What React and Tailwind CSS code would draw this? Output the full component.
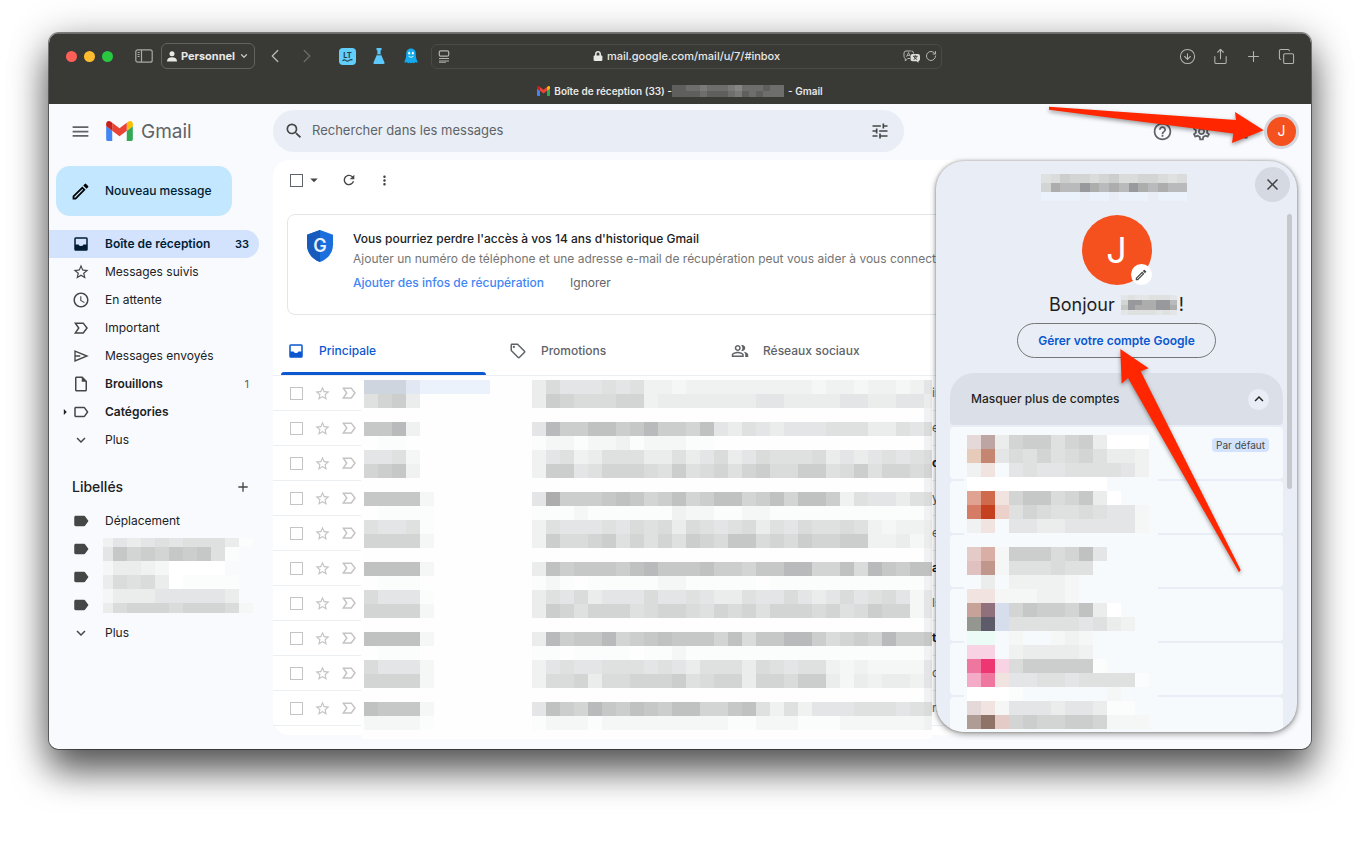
import {
  ChevronDown,
  ChevronLeft,
  ChevronRight,
  CircleArrowDown,
  Copy,
  Plus,
  RotateCw,
  Share,
} from "lucide-react";
import { FaLock } from "react-icons/fa";
import {
  MdAccessTime,
  MdAdd,
  MdApps,
  MdArrowDropDown,
  MdArrowRight,
  MdClose,
  MdExpandMore,
  MdHelpOutline,
  MdKeyboardArrowUp,
  MdLabel,
  MdLabelOutline,
  MdMenu,
  MdMoreVert,
  MdOutlineInsertDriveFile,
  MdOutlineLocalOffer,
  MdOutlineModeEdit,
  MdOutlinePeopleAlt,
  MdOutlineSettings,
  MdRefresh,
  MdSearch,
  MdStarBorder,
  MdTune,
} from "react-icons/md";

// one letter per pixelated cell, from light to dark
const SHADES = {
  ".": "transparent",
  w: "#ffffff",
  z: "#f1f2f4",
  a: "#fbfcfc",
  b: "#f5f6f6",
  c: "#f0f1f1",
  d: "#ebecec",
  e: "#e4e5e6",
  f: "#dfe0e0",
  g: "#dadbdb",
  h: "#d3d4d4",
  i: "#cccdcd",
  j: "#c6c7c7",
  k: "#c0c1c1",
  l: "#b9babb",
  m: "#adadad",
  n: "#97999d",
  1: "#cfd5de",
  2: "#e1e8f3",
  3: "#ecf2fc",
  A: "#e4d9d8",
  B: "#bca5a3",
  C: "#e6cbbb",
  D: "#c48670",
  E: "#f0e3e0",
  F: "#e0a392",
  G: "#d06a4d",
  H: "#d47c66",
  I: "#c5401f",
  J: "#ecd0ca",
  K: "#e4cbc8",
  L: "#d9afa5",
  M: "#e0c1c0",
  N: "#c0978a",
  O: "#c7a299",
  P: "#91707d",
  Q: "#949790",
  R: "#5d5a6a",
  S: "#d6ddec",
  T: "#ebfcf6",
  U: "#f7d3e3",
  V: "#ee769f",
  W: "#ed3672",
  X: "#f3abc8",
  Y: "#af9d95",
  Z: "#8f7367",
};

const MAIL_CELLS = [
  ["111233333", "dgeeefefccbcccccccccbccbccbce"],
  ["fhid", "dihggghhcdddddddeeddddeeddeedf"],
  ["", "............................z"],
  ["jjlc", "eliikkijliihkedfedeeefffddfeg"],
  [".aa", "abbabbcabbbaa...............z"],
  ["eefb", "cefcdfffddfdegdegfffgdedefefg"],
  ["hijc", "ciiefhhhgfifghfhiggiifgifhhgh"],
  ["", "............................z"],
  ["jjjjb", "emiiijkjhikhikkhikhkkicfeedfg"],
  [".aaaa", "aaabaaaaaacbbaabbaaaaaaaaaaaz"],
  ["feefa", "cfeeefegfgdgfefgdfegffgfcbccd"],
  ["hhhhb", "cigghifhfhfihgjjghgihhiiccdbd"],
  ["", "............................z"],
  ["kkkkb", "dkijjjikljjjkiihjjllhhkgljikk"],
  [".aaa", "aba.aaaaabbaaaaa.aaaaaaaaaaaz"],
  ["geeea", "dfegdeeegeefeddfeegedegefgebe"],
  ["hhhhb", "dihfhhhfghhgfhghfhhhghfgihhbe"],
  ["", "............................z"],
  ["kkkkb", "dlijjlhijkjjjhkgjjllighihliij"],
  [".aaa", "aa.aaaa.aabaaaaaaaaaaaaaaaaaz"],
  ["geeeb", "cefeefffefedfffdgfeffcbcbbbbe"],
  ["hhhhb", "cgghdgghhhifghhdhhgiidbdcddce"],
  ["", "............................z"],
  ["kjjjb", "ekihljikjikkhhjkfcfceeefffefg"],
  ["bbbba", "abbbabbbbbbbbbaabbbaaabbbbbbc"],
].map(([sender, text]) => sender.padEnd(12, ".") + text);

const ACCOUNT_CELLS = [
  "ABdhiifhidwww.",
  "CDegfhfghfddc.",
  "cE.efeeffffec.",
  "wwwwwwwwww....",
  "FGEhjjghjdw...",
  "HIJfhgffgfeeb.",
  "cE.eeddeeeeeb.",
  "..............",
  "KLbiiighke....",
  "MNbfffgff.....",
  ".d.ccccb......",
  "EEbbbccb......",
  "OPShjiihkdw...",
  "QRSfffffefdc..",
  "TT.b..bcb.....",
  "UU.cddddc.....",
  "VWUgiiiiia....",
  "XVEeeffeffffa.",
  "wwwa......b...",
  "AEbeeedeedaa..",
  "YZKhihhiihbbb.",
];

const EMAIL_CELLS = ["fgihhghigghhgfg", "hmllnmlmlnmlmll", "3333.33.333.333"];
const NAME_CELLS = ["efeefffe", "hnnmmnnl", "jnmmmnnm", "effffefe"];
const TITLE_CELLS = ["4455655567555455", "4444544456454555"];

const TITLE_SHADES = {
  4: "#5f5f5d",
  5: "#6e6e6c",
  6: "#7a7a78",
  7: "#868684",
};

function InboxIcon({ className }) {
  return (
    <svg viewBox="0 0 24 24" className={className} fill="currentColor" aria-hidden="true">
      <path
        fillRule="evenodd"
        d="M5 3h14a2 2 0 0 1 2 2v14a2 2 0 0 1-2 2H5a2 2 0 0 1-2-2V5a2 2 0 0 1 2-2zM5 5v7.500h3.700a3.600 3.600 0 0 0 6.600 0H19V5z"
      />
    </svg>
  );
}

function ImportantIcon({ className }) {
  return (
    <svg viewBox="0 0 24 24" className={className} fill="none" stroke="currentColor" strokeWidth="2" aria-hidden="true">
      <path d="M4.500 5.500h10.500l5 6.500-5 6.500H4.500l4.500-6.500z" />
    </svg>
  );
}

function SendIcon({ className }) {
  return (
    <svg viewBox="0 0 24 24" className={className} fill="none" stroke="currentColor" strokeWidth="1.800" aria-hidden="true">
      <path d="M4 5.500L20 12 4 18.500zM4 12h7" />
    </svg>
  );
}

const NAV = [
  { label: "Boîte de réception", icon: InboxIcon, count: "33", active: true },
  { label: "Messages suivis", icon: MdStarBorder },
  { label: "En attente", icon: MdAccessTime },
  { label: "Important", icon: ImportantIcon },
  { label: "Messages envoyés", icon: SendIcon },
  { label: "Brouillons", icon: MdOutlineInsertDriveFile, count: "1", bold: true },
  { label: "Catégories", icon: MdLabelOutline, bold: true, arrow: true },
  { label: "Plus", icon: MdExpandMore },
];

const LABELS = [
  { label: "Déplacement", icon: MdLabel },
  { icon: MdLabel },
  { icon: MdLabel },
  { icon: MdLabel },
  { label: "Plus", icon: MdExpandMore },
];

const LABEL_CELLS = [
  "cedefefffdac.",
  "ejhihjijfa.c.",
  "bddcbwwww....",
  "dgfgdwaaaa...",
  "bdddeeeeed...",
  "dghhhghhhgb..",
];

const TABS = [
  { label: "Principale", icon: InboxIcon, active: true },
  { label: "Promotions", icon: MdOutlineLocalOffer },
  { label: "Réseaux sociaux", icon: MdOutlinePeopleAlt },
];

const SNIPPETS = [
  { text: "in" },
  { text: "e" },
  { text: "c", bold: true },
  { text: "y" },
  { text: "e" },
  { text: "a", bold: true },
  { text: "ls" },
  { text: "t", bold: true },
  { text: "c" },
  { text: "n" },
];

function Mosaic({ rows, cell, shades = SHADES }) {
  return (
    <div aria-hidden="true">
      {rows.map((row, y) => (
        <div key={y} className="flex">
          {row.split("").map((c, x) => (
            <span key={x} className={cell} style={{ backgroundColor: shades[c] }} />
          ))}
        </div>
      ))}
    </div>
  );
}

function GmailLogo({ className }) {
  return (
    <svg viewBox="52 42 88 66" className={className} aria-hidden="true">
      <path fill="#4285f4" d="M58 108h14V74L52 59v43c0 3.32 2.69 6 6 6" />
      <path fill="#34a853" d="M120 108h14c3.32 0 6-2.69 6-6V59l-20 15" />
      <path fill="#fbbc04" d="M120 48v26l20-15v-8c0-7.42-8.47-11.65-14.4-7.2" />
      <path fill="#ea4335" d="M72 74V48l24 18 24-18v26L96 92" />
      <path fill="#c5221f" d="M52 51v8l20 15V48l-5.6-4.2c-5.94-4.45-14.4-.22-14.4 7.2" />
    </svg>
  );
}

function ExtensionIcons() {
  return (
    <>
      <button aria-label="LanguageTool" className="ml-[21px]">
        <svg viewBox="0 0 17 17" className="size-[17px]">
          <rect width="17" height="17" rx="4" fill="#62cffb" />
          <text x="8.5" y="9.5" textAnchor="middle" fontSize="7.5" fontWeight="700" fill="#26414d">
            LT
          </text>
          <path d="M3.5 12.8q1.7-1.8 3.3-.4t3.4 0 3.3-.4" fill="none" stroke="#26414d" strokeWidth="1.2" />
        </svg>
      </button>
      <button aria-label="Flacon" className="ml-4">
        <svg viewBox="0 0 14 18" className="h-[18px] w-3.5">
          <path d="M4.5 1h5v2.2h-.9v3.2l3.900 9.200c.3.8-.1 1.400-.9 1.400H2.400c-.8 0-1.200-.6-.9-1.400l3.900-9.200V3.200h-.9z" fill="#5cc8fb" />
          <path d="M5 7.800h4" stroke="#393936" strokeWidth="1" />
        </svg>
      </button>
      <button aria-label="Ghostery" className="ml-[18px]">
        <svg viewBox="0 0 14 16" className="h-4 w-3.5">
          <path
            d="M7 .5c3.200 0 4.800 2.300 4.800 5.400 0 3 .4 5.200 2 8.300-1 .6-1.900.5-2.700-.2-.6 1.300-1.900 1.700-2.700.6-.8 1-2 1-2.800 0-.8 1.100-2.100.7-2.700-.6-.8.7-1.700.8-2.700.2 1.600-3.100 2-5.300 2-8.300C2.200 2.800 3.800.5 7 .5z"
            fill="#12a9ee"
          />
          <ellipse cx="5.200" cy="5.200" rx="1" ry="1.400" fill="#fff" />
          <ellipse cx="8.800" cy="5.200" rx="1" ry="1.400" fill="#fff" />
          <path d="M4.500 8.300q2.500 2 5 0" fill="none" stroke="#fff" strokeWidth=".8" />
        </svg>
      </button>
    </>
  );
}

function BrowserBar() {
  return (
    <div className="border-t border-[#6c6c6a] bg-[#393936] text-[#e8e8e6]">
      <div className="flex h-11 items-center">
        <div className="flex w-[382px] shrink-0 items-center pl-[17px]">
          <div className="flex gap-[7px]">
            <span className="size-[11px] rounded-full bg-[#ff5f57]" />
            <span className="size-[11px] rounded-full bg-[#febc2e]" />
            <span className="size-[11px] rounded-full bg-[#28c840]" />
          </div>
          <button aria-label="Barre latérale" className="ml-[22px]">
            <svg viewBox="0 0 18 14" className="h-3.5 w-[18px]" fill="none" stroke="#a9a9a7" strokeWidth="1.2">
              <rect x=".8" y=".8" width="16.400" height="12.400" rx="2" />
              <path d="M6.500 1v12M2.600 3.500h2M2.600 5.500h2M2.600 7.500h2" />
            </svg>
          </button>
          <button className="ml-2 flex h-[26px] w-[94px] items-center justify-center gap-1 rounded-md border border-[#62625f] text-[11px] font-bold">
            <svg viewBox="0 0 10 11" className="h-[11px] w-2.5" fill="currentColor">
              <circle cx="5" cy="2.700" r="2.500" />
              <path d="M0 10.500C0 7.500 2 6.200 5 6.200s5 1.300 5 4.300z" />
            </svg>
            Personnel
            <ChevronDown className="size-2.5 text-[#c4c4c2]" strokeWidth={3} />
          </button>
          <button aria-label="Précédent" className="ml-[9px]">
            <ChevronLeft className="size-[22px] text-[#b4b4b2]" strokeWidth={1.5} />
          </button>
          <button aria-label="Suivant" className="ml-2.5">
            <ChevronRight className="size-[22px] text-[#696967]" strokeWidth={1.5} />
          </button>
          <ExtensionIcons />
        </div>
        <div className="flex h-[25px] flex-1 items-center rounded-md border border-[#4a4a47] pr-1 pl-1.5">
          <svg viewBox="0 0 11 13" className="h-[13px] w-3" fill="none" stroke="#b4b4b2" strokeWidth="1.200">
            <rect x=".8" y=".8" width="9.400" height="5.400" rx="1.500" />
            <path d="M.5 8.500h10M.5 11h10" />
            <path d="M.5 12.400h7" strokeWidth=".8" />
          </svg>
          <div className="flex flex-1 items-center justify-center gap-1 pl-5 text-[11px] font-medium">
            <FaLock className="size-2.5" />
            mail.google.com/mail/u/7/#inbox
          </div>
          <button aria-label="Traduire">
            <svg viewBox="0 0 18 13" className="h-[13px] w-[18px]">
              <path
                d="M8 1H3a2 2 0 0 0-2 2v3.500a2 2 0 0 0 1.300 1.900V11l2.400-2.500H7M10.500 3.500V3a2 2 0 0 0-2-2"
                fill="none"
                stroke="#b4b4b2"
              />
              <path d="M3.500 6.800L5.500 2.500l1.700 3.600M4.200 5.400h2.500" fill="none" stroke="#b4b4b2" strokeWidth=".9" />
              <path d="M9.500 4H15a2 2 0 0 1 2 2v3.200a2 2 0 0 1-1.500 1.900v1.700L13.500 11.200h-4a2 2 0 0 1-2-2V6a2 2 0 0 1 2-2z" fill="#dededc" />
              <path d="M10 6.300h4.600M12.300 5.200v1.100M10.600 9.500q2.700-1 3.200-3.200M10.900 6.500q.7 2.200 3.200 3" fill="none" stroke="#393936" strokeWidth=".9" />
            </svg>
          </button>
          <button aria-label="Recharger" className="ml-1">
            <RotateCw className="size-3 text-[#b4b4b2]" />
          </button>
        </div>
        <div className="flex w-[369px] shrink-0 items-center justify-end gap-4 pr-4 text-[#b4b4b2]">
          <button aria-label="Téléchargements">
            <CircleArrowDown className="size-[17px]" strokeWidth={1.5} />
          </button>
          <button aria-label="Partager">
            <Share className="size-[17px]" strokeWidth={1.5} />
          </button>
          <button aria-label="Nouvel onglet">
            <Plus className="size-[17px]" strokeWidth={1.5} />
          </button>
          <button aria-label="Tous les onglets">
            <Copy className="size-[17px]" strokeWidth={1.5} />
          </button>
        </div>
      </div>
      <div className="flex h-[26px] items-center justify-center text-[10px] font-semibold">
        <GmailLogo className="mr-1 h-2.5 w-[13px]" />
        Boîte de réception (33) -
        <Mosaic rows={TITLE_CELLS} cell="h-[6px] w-[7px]" shades={TITLE_SHADES} />
        <span className="pl-1">- Gmail</span>
      </div>
    </div>
  );
}

function Header() {
  return (
    <header className="flex h-14 items-center pb-0.5">
      <div className="flex w-56 shrink-0 items-center pl-[21px]">
        <button aria-label="Menu principal">
          <MdMenu className="size-[21px] text-[#5f6368]" />
        </button>
        <GmailLogo className="ml-[15px] h-5 w-[27px]" />
        <span className="ml-2 pt-0.5 text-[19px] text-[#5f6368]">Gmail</span>
      </div>
      <label className="flex h-[42px] w-[631px] items-center rounded-full bg-[#e9eef6] pr-3.5 pl-[11px]">
        <MdSearch className="size-5 shrink-0 text-[#444746]" />
        <input
          type="text"
          aria-label="Rechercher dans les messages"
          placeholder="Rechercher dans les messages"
          className="ml-2 flex-1 bg-transparent text-[13px] outline-none placeholder:text-[#5f6368]"
        />
        <button aria-label="Options de recherche">
          <MdTune className="size-5 text-[#444746]" />
        </button>
      </label>
      <div className="ml-auto flex items-center pr-3 text-[#5f6368]">
        <button aria-label="Aide">
          <MdHelpOutline className="size-[21px]" />
        </button>
        <button aria-label="Paramètres" className="ml-[18px]">
          <MdOutlineSettings className="size-[21px]" />
        </button>
        <button aria-label="Applications Google" className="ml-[18px]">
          <MdApps className="size-[21px]" />
        </button>
        <button
          aria-label="Compte Google"
          className="ml-[13px] flex size-[35px] items-center justify-center rounded-full border-[3px] border-[#d5d8de] bg-[#f4511e] text-sm text-white"
        >
          J
        </button>
      </div>
    </header>
  );
}

function NavItem({ item }) {
  const Icon = item.icon;
  const strong = item.active || item.bold;
  return (
    <li
      className={`flex h-7 items-center rounded-r-full pr-2.5 text-xs ${
        item.active ? "bg-[#d3e3fd] text-[#001d35]" : "text-[#202124]"
      } ${strong ? "font-semibold" : ""}`}
    >
      <span className="flex w-[23px] justify-end">
        {item.arrow && <MdArrowRight className="size-3.5" />}
      </span>
      <Icon className={`size-[18px] ${item.active ? "" : "text-[#444746]"}`} />
      {item.label && (
        <a href="#" className="ml-[15px] flex-1">
          {item.label}
        </a>
      )}
      {item.count && (
        <span className={`text-[11px] ${item.active ? "" : "font-normal text-[#5f6368]"}`}>{item.count}</span>
      )}
    </li>
  );
}

function Sidebar() {
  return (
    <nav className="w-56 shrink-0 pt-1.5 pr-3.5">
      <button className="ml-[7px] flex h-[50px] w-[176px] items-center rounded-[14px] bg-[#c2e7ff] pl-3.5 text-xs font-medium text-[#001d35]">
        <MdOutlineModeEdit className="mr-3.5 size-[21px] text-black" />
        Nouveau message
      </button>
      <ul className="mt-3.5">
        {NAV.map((item) => (
          <NavItem key={item.label} item={item} />
        ))}
      </ul>
      <div className="mt-[22px] flex h-[22px] items-center justify-between pr-2 pl-[23px]">
        <h2 className="text-sm font-medium text-[#202124]">Libellés</h2>
        <button aria-label="Créer un libellé">
          <MdAdd className="size-4 text-[#444746]" />
        </button>
      </div>
      <div className="relative mt-[9px]">
        <ul>
          {LABELS.map((item, i) => (
            <NavItem key={i} item={item} />
          ))}
        </ul>
        <div className="absolute top-[31px] left-[54px] h-[75px] w-[150px] overflow-hidden">
          <div className="-mt-[5px] -ml-1">
            <Mosaic rows={LABEL_CELLS} cell="h-3.5 w-3.5 shrink-0" />
          </div>
        </div>
      </div>
    </nav>
  );
}

function SecurityBanner() {
  return (
    <section className="mx-3.5 flex h-[101px] rounded-lg border border-[#e3e5e8] pt-[15px] pl-[19px]">
      <svg viewBox="0 0 26 32" className="h-8 w-[26px] shrink-0">
        <path d="M13 0l13 4.800v10C26 23.500 20 29.500 13 32 6 29.500 0 23.500 0 14.800v-10z" fill="#1a6fdc" />
        <path d="M13 0v32C6 29.500 0 23.500 0 14.800v-10z" fill="#185abc" />
        <text x="13" y="21.500" textAnchor="middle" fontSize="18" fontWeight="600" fill="#e8f0fe">
          G
        </text>
      </svg>
      <div className="-mt-px ml-5 text-xs leading-5 whitespace-nowrap">
        <h3 className="font-medium text-[#202124]">
          Vous pourriez perdre l'accès à vos 14 ans d'historique Gmail
        </h3>
        <p className="text-[#757575]">
          Ajouter un numéro de téléphone et une adresse e-mail de récupération peut vous aider à vous connecter
        </p>
        <div className="mt-1 flex gap-[26px]">
          <a href="#" className="font-medium text-[#4285f4]">
            Ajouter des infos de récupération
          </a>
          <button className="text-[#5f6368]">Ignorer</button>
        </div>
      </div>
    </section>
  );
}

function MailList() {
  return (
    <div className="relative">
      <ul>
        {SNIPPETS.map((snippet, i) => (
          <li key={i} className="flex h-[35px] items-center border-b border-[#eceff1] pl-[17px] text-[#c4c4c4]">
            <input
              type="checkbox"
              aria-label={`Sélectionner le message ${i + 1}`}
              className="size-[13px] appearance-none border-[1.5px] border-[#c4c4c4] bg-white"
            />
            <button aria-label="Suivre" className="ml-[11px]">
              <MdStarBorder className="size-[17px]" />
            </button>
            <button aria-label="Marquer comme important" className="ml-[9px]">
              <ImportantIcon className="size-[18px]" />
            </button>
            <span
              className={`ml-[574px] text-xs ${
                snippet.bold ? "font-bold text-[#202124]" : "text-[#5f6368]"
              }`}
            >
              {snippet.text}
            </span>
          </li>
        ))}
      </ul>
      <div className="absolute top-0 left-[88px] h-[363px] w-[571px] overflow-hidden bg-[#fefefe] pt-1 pl-[3px]">
        <Mosaic rows={MAIL_CELLS} cell="h-3.5 w-3.5 shrink-0" />
      </div>
    </div>
  );
}

function Inbox() {
  return (
    <main className="mr-[49px] h-[575px] min-w-0 flex-1 rounded-2xl bg-white">
      <div className="flex h-10 items-center pl-[17px] text-[#444746]">
        <input
          type="checkbox"
          aria-label="Tout sélectionner"
          className="size-[13px] appearance-none border-[1.5px] border-[#5f6368]"
        />
        <MdArrowDropDown className="ml-0.5 size-[18px]" />
        <button aria-label="Actualiser" className="ml-[18px]">
          <MdRefresh className="size-4" />
        </button>
        <button aria-label="Plus d'actions" className="ml-5">
          <MdMoreVert className="size-[15px]" />
        </button>
      </div>
      <div className="pt-3.5">
        <SecurityBanner />
      </div>
      <div className="mt-3 flex h-[49px] border-b border-[#eceff1]">
        {TABS.map((tab) => (
          <button
            key={tab.label}
            className={`flex w-[222px] flex-col px-2 pt-[3px] text-xs font-medium ${
              tab.active ? "text-[#0b57d0]" : "text-[#5f6368]"
            }`}
          >
            <span className="flex flex-1 items-center gap-3.5 pl-1.5">
              <tab.icon className="size-[18px]" />
              {tab.label}
            </span>
            <span className={`h-[3px] w-[205px] rounded-t-full ${tab.active ? "bg-[#0b57d0]" : ""}`} />
          </button>
        ))}
      </div>
      <MailList />
    </main>
  );
}

function AccountPanel() {
  return (
    <aside className="absolute top-[57px] right-3.5 bottom-[17px] w-[361px] overflow-hidden rounded-[28px] bg-[#e9eef6] shadow-[0_2px_6px_rgba(0,0,0,0.4),0_0_3px_rgba(0,0,0,0.3)]">
      <div className="flex h-[54px] items-start justify-end pt-1.5 pr-[7px]">
        <div className="mt-[7px] mr-[68px] w-[146px]">
          <Mosaic rows={EMAIL_CELLS} cell="h-[9px] flex-1" />
        </div>
        <button aria-label="Fermer" className="flex size-[35px] items-center justify-center rounded-full bg-[#d5d9e1]">
          <MdClose className="size-[19px] text-[#444746]" />
        </button>
      </div>
      <div className="flex flex-col items-center">
        <div className="relative flex size-[70px] items-center justify-center rounded-full bg-[#f4511e] text-4xl text-white">
          J
          <button
            aria-label="Modifier la photo"
            className="absolute right-0 bottom-0 flex size-[21px] items-center justify-center rounded-full bg-white"
          >
            <MdOutlineModeEdit className="size-3.5 text-[#444746]" />
          </button>
        </div>
        <h2 className="mt-1.5 flex h-7 items-center text-lg text-[#1f1f1f]">
          Bonjour
          <span className="mr-0.5 ml-1.5">
            <Mosaic rows={NAME_CELLS} cell="h-[5px] w-[7px]" />
          </span>
          !
        </h2>
        <button className="mt-1 h-[35px] w-[199px] rounded-full border border-[#747775] text-xs font-semibold text-[#0b57d0]">
          Gérer votre compte Google
        </button>
      </div>
      <div className="mt-[15px] flex flex-col gap-0.5 px-3.5">
        <button className="flex h-[52px] items-center justify-between rounded-t-[24px] rounded-b-sm bg-[#dbdfe7] pr-3.5 pl-[21px] text-xs font-medium text-[#1f1f1f]">
          Masquer plus de comptes
          <span className="flex size-[21px] items-center justify-center rounded-full bg-[#e9eef6]">
            <MdKeyboardArrowUp className="size-[18px]" />
          </span>
        </button>
        <div className="relative">
          <ul className="flex flex-col gap-0.5">
            {[0, 1, 2, 3, 4, 5].map((i) => (
              <li key={i} className="flex h-[52px] justify-end rounded-sm bg-[#f6fafd] pt-[11px] pr-3.5">
                {i === 0 && (
                  <span className="h-3.5 rounded-sm bg-[#d3e3fd] px-1 text-[10px] leading-[14px] text-[#444746]">
                    Par défaut
                  </span>
                )}
              </li>
            ))}
          </ul>
          <div className="absolute top-px left-3.5 w-[194px] overflow-hidden bg-[#f6fafd] pt-[7px] pl-[3px]">
            <Mosaic rows={ACCOUNT_CELLS} cell="h-3.5 w-3.5 shrink-0" />
          </div>
        </div>
      </div>
      <div className="absolute top-[53px] right-[5px] h-[275px] w-[5px] rounded-full bg-[#c5c8cd]" />
    </aside>
  );
}

function Arrows() {
  return (
    <svg
      viewBox="1041 33 270 560"
      className="pointer-events-none absolute top-0 right-0 h-[560px] w-[270px] drop-shadow-[0_2px_2px_rgba(0,0,0,0.4)]"
      fill="#ff2600"
      aria-hidden="true"
    >
      <path d="M1049 106.700L1236 120L1235 112L1263.700 130.300L1232 143L1233.300 133.500L1049 109.700z" />
      <path d="M1120.300 349L1148.700 368.300L1140.700 371.300L1240.700 570L1239 572.300L1128 378L1121.700 383.700z" />
    </svg>
  );
}

export default function App() {
  return (
    <div className="overflow-hidden bg-white px-[49px] pt-[33px] pb-[101px] font-['Inter','Liberation_Sans',sans-serif]">
      <div className="relative rounded-[10px] shadow-[0_0_0_1px_rgba(0,0,0,0.45),0_22px_36px_rgba(0,0,0,0.6),0_4px_40px_rgba(0,0,0,0.25)]">
        <div className="overflow-hidden rounded-[10px] bg-[#f8fafd]">
          <BrowserBar />
          <div className="relative pb-3.5">
            <Header />
            <div className="flex">
              <Sidebar />
              <Inbox />
            </div>
            <AccountPanel />
          </div>
        </div>
        <Arrows />
      </div>
    </div>
  );
}
